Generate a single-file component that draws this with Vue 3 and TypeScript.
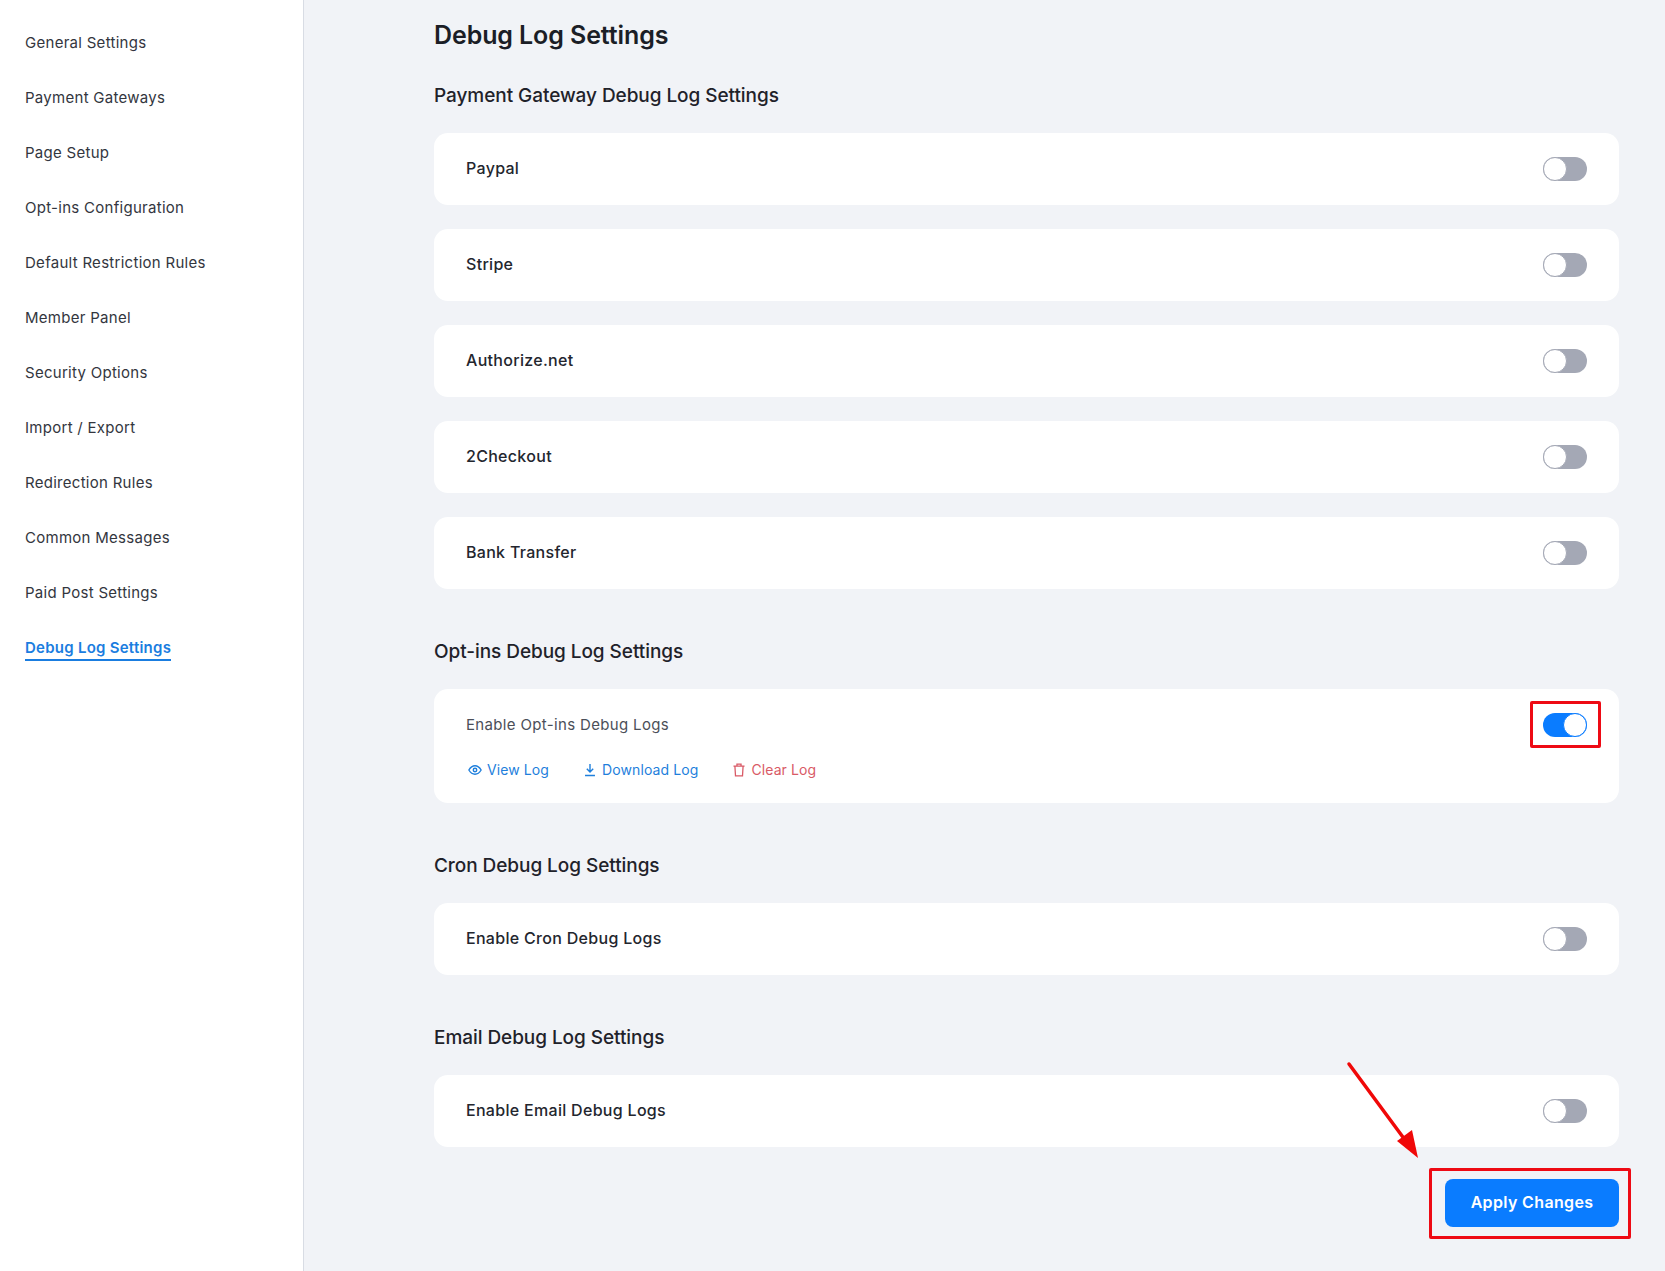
<script setup lang="ts">
import { ref } from 'vue';

type Row = { label: string, on: boolean };

const menu = [
    'General Settings',
    'Payment Gateways',
    'Page Setup',
    'Opt-ins Configuration',
    'Default Restriction Rules',
    'Member Panel',
    'Security Options',
    'Import / Export',
    'Redirection Rules',
    'Common Messages',
    'Paid Post Settings',
    'Debug Log Settings'
];

const gateways = ref<Row[]>([
    { label: 'Paypal', on: false },
    { label: 'Stripe', on: false },
    { label: 'Authorize.net', on: false },
    { label: '2Checkout', on: false },
    { label: 'Bank Transfer', on: false }
]);

const optins = ref<Row>({ label: 'Enable Opt-ins Debug Logs', on: true });
const cron = ref<Row>({ label: 'Enable Cron Debug Logs', on: false });
const email = ref<Row>({ label: 'Enable Email Debug Logs', on: false });
</script>

<template>
    <div class="page">
        <aside class="sidebar">
            <a
                v-for="item in menu"
                :key="item"
                class="menu-item"
            >
                <span :class="{ active: item === 'Debug Log Settings' }">{{ item }}</span>
            </a>
        </aside>

        <main class="content">
            <h1 class="title">Debug Log Settings</h1>

            <h2 class="section-title">Payment Gateway Debug Log Settings</h2>
            <div class="stack">
                <div v-for="row in gateways" :key="row.label" class="card row">
                    <span class="label">{{ row.label }}</span>
                    <button class="toggle" :class="{ on: row.on }" @click="row.on = !row.on"><i></i></button>
                </div>
            </div>

            <h2 class="section-title spaced">Opt-ins Debug Log Settings</h2>
            <div class="card optins">
                <div class="optins-head">
                    <span class="label plain">{{ optins.label }}</span>
                    <div class="marked">
                        <button class="toggle" :class="{ on: optins.on }" @click="optins.on = !optins.on"><i></i></button>
                        <span class="mark mark-toggle"></span>
                    </div>
                </div>
                <div class="links">
                    <a class="link blue">
                        <svg width="14" height="14" viewBox="0 0 24 24" fill="none" stroke="currentColor" stroke-width="2.4">
                            <path d="M1.5 12C4.5 7 8 4.8 12 4.8S19.5 7 22.5 12C19.5 17 16 19.2 12 19.2S4.500 17 1.500 12Z" />
                            <circle cx="12" cy="12" r="3" />
                        </svg>
                        View Log
                    </a>
                    <a class="link blue">
                        <svg width="14" height="14" viewBox="0 0 24 24" fill="none" stroke="currentColor" stroke-width="2.4">
                            <path d="M12 1.500V15M6.500 10L12 15.500L17.500 10M3.500 21.500H20.500" />
                        </svg>
                        Download Log
                    </a>
                    <a class="link red">
                        <svg width="14" height="14" viewBox="0 0 24 24" fill="none" stroke="currentColor" stroke-width="2.2">
                            <path d="M2.500 5.500H21.500M8.500 5.500V2H15.500V5.500M5 5.500L6 22H18L19 5.500" />
                        </svg>
                        Clear Log
                    </a>
                </div>
            </div>

            <h2 class="section-title spaced">Cron Debug Log Settings</h2>
            <div class="card row">
                <span class="label">{{ cron.label }}</span>
                <button class="toggle" :class="{ on: cron.on }" @click="cron.on = !cron.on"><i></i></button>
            </div>

            <h2 class="section-title spaced">Email Debug Log Settings</h2>
            <div class="card row">
                <span class="label">{{ email.label }}</span>
                <button class="toggle" :class="{ on: email.on }" @click="email.on = !email.on"><i></i></button>
            </div>

            <div class="actions">
                <div class="marked">
                    <button class="apply">Apply Changes</button>
                    <span class="mark mark-apply"></span>
                    <svg class="arrow" width="74" height="98" viewBox="0 0 74 98">
                        <path d="M2 2L61 82" fill="none" stroke="#f00808" stroke-width="3.500" stroke-linecap="round" />
                        <path d="M71 96L50 79L65 68Z" fill="#f00808" />
                    </svg>
                </div>
            </div>
        </main>
    </div>
</template>

<style>
html, body {
    margin: 0;
    background: #f1f3f7;
}
</style>

<style scoped>
.page {
    display: flex;
    min-height: 1271px;
    font-family: Inter, "Liberation Sans", sans-serif;
    color: #2b2e36;
}

.sidebar {
    box-sizing: border-box;
    width: 304px;
    flex-shrink: 0;
    padding: 15px 0 0 25px;
    background: #fff;
    border-right: 1px solid #d8dce4;
}

.menu-item {
    display: flex;
    align-items: center;
    height: 55px;
    font-size: 15px;
    letter-spacing: 0.28px;
    color: #33363e;
}

.menu-item .active {
    color: #1a7de0;
    font-weight: 600;
    letter-spacing: 0.25px;
    border-bottom: 2px solid #1a7de0;
    padding-bottom: 2px;
    margin-top: 4px;
}

.content {
    flex: 1;
    padding: 17px 46px 0 130px;
}

.title {
    margin: 0 0 28px;
    font-size: 25px;
    line-height: 36px;
    font-weight: 600;
    letter-spacing: -0.1px;
    color: #1b1e26;
}

.section-title {
    margin: 0 0 23px;
    padding-top: 1px;
    font-size: 19px;
    line-height: 28px;
    font-weight: 500;
    letter-spacing: -0.06px;
    color: #1f222a;
}

.section-title.spaced {
    margin-top: 48px;
}

.stack {
    display: flex;
    flex-direction: column;
    gap: 24px;
}

.card {
    box-sizing: border-box;
    background: #fff;
    border-radius: 14px;
    padding: 0 32px;
}

.row {
    display: flex;
    align-items: center;
    justify-content: space-between;
    height: 72px;
}

.label {
    padding-bottom: 2px;
    font-size: 16px;
    font-weight: 500;
    letter-spacing: 0.3px;
    color: #23262e;
}

.label.plain {
    font-weight: 400;
    font-size: 15px;
    letter-spacing: 0.34px;
    color: #4b4f59;
}

.toggle {
    position: relative;
    display: block;
    width: 44px;
    height: 24px;
    padding: 0;
    border: 0;
    border-radius: 12px;
    background: #a4a8b5;
    cursor: pointer;
}

.toggle i {
    position: absolute;
    top: 0;
    left: 0;
    box-sizing: border-box;
    width: 24px;
    height: 24px;
    border-radius: 50%;
    background: #fff;
    border: 1px solid #a4a8b5;
}

.toggle.on {
    background: #0a7cff;
}

.toggle.on i {
    left: 20px;
    border-color: #0a7cff;
}

.optins {
    height: 114px;
    padding-top: 24px;
}

.optins-head {
    display: flex;
    align-items: center;
    justify-content: space-between;
}

.marked {
    position: relative;
}

.mark {
    position: absolute;
    box-sizing: border-box;
    border: 3px solid #ee0a14;
    border-radius: 2px;
    pointer-events: none;
}

.mark-toggle {
    top: -12px;
    right: -14px;
    bottom: -11px;
    left: -13px;
}

.mark-apply {
    top: -11px;
    right: -12px;
    bottom: -12px;
    left: -16px;
}

.links {
    display: flex;
    margin-top: 21px;
    padding-left: 2px;
}

.link {
    display: flex;
    align-items: center;
    gap: 5px;
    font-size: 14px;
    letter-spacing: 0.1px;
    line-height: 24px;
    margin-right: 34px;
}

.link.blue {
    color: #1f7fdc;
}

.link.red {
    color: #d95a66;
}

.actions {
    display: flex;
    justify-content: flex-end;
    margin-top: 32px;
}

.apply {
    display: block;
    width: 174px;
    height: 48px;
    padding: 0 0 2px;
    border: 0;
    border-radius: 8px;
    background: #0a7cff;
    color: #fff;
    font-family: inherit;
    font-size: 16px;
    font-weight: 600;
    letter-spacing: 0.35px;
    cursor: pointer;
}

.arrow {
    position: absolute;
    top: -117px;
    left: -98px;
    overflow: visible;
    pointer-events: none;
}
</style>
